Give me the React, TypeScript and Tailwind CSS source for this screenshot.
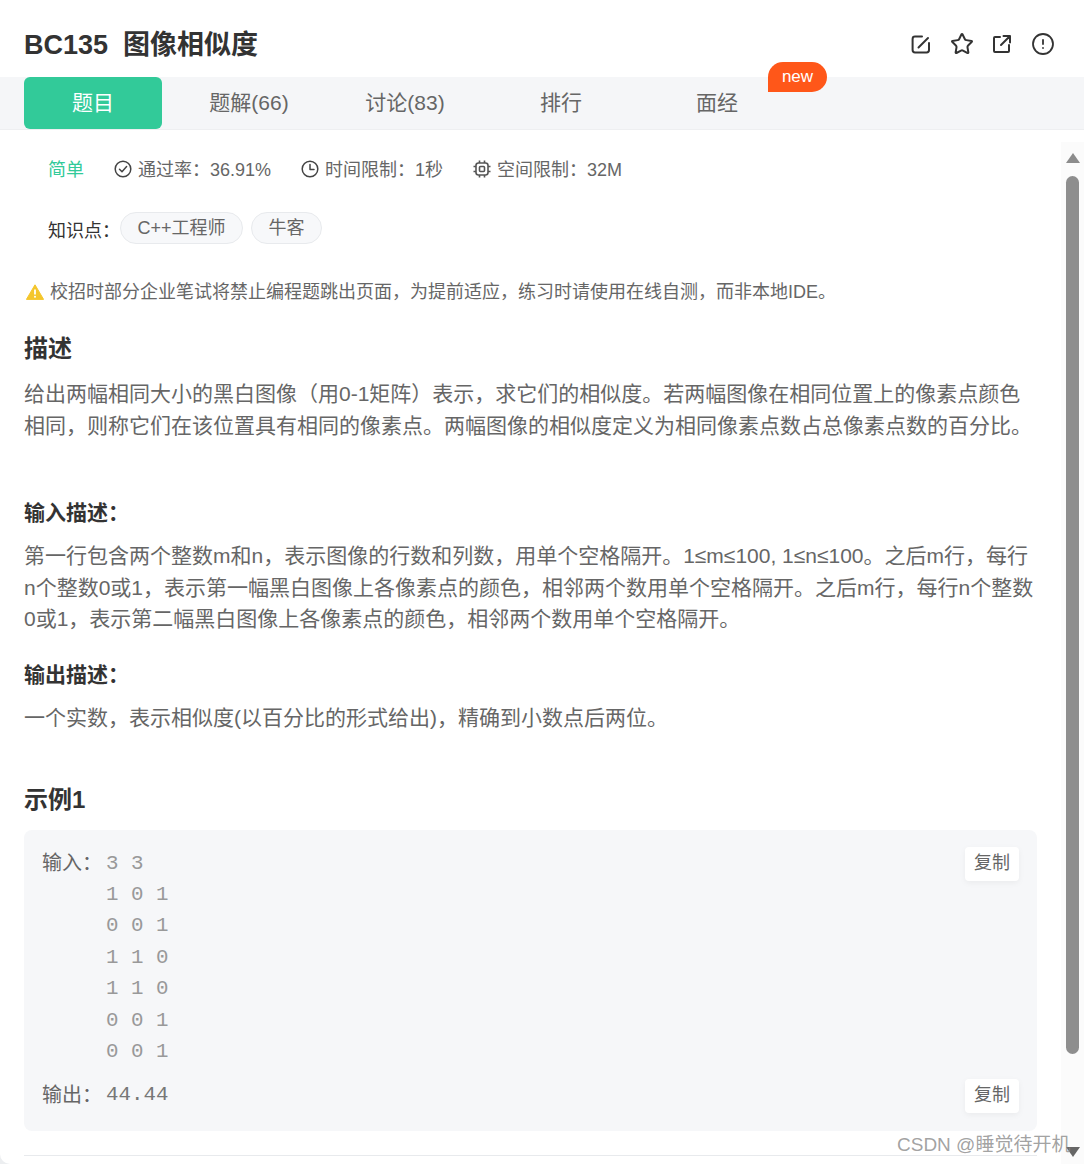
import { Star, CircleAlert } from 'lucide-react'

const font = { fontFamily: '"Liberation Sans", "Noto Sans CJK SC", sans-serif' }

const tabs = [
  { label: '题目', active: true },
  { label: '题解(66)' },
  { label: '讨论(83)' },
  { label: '排行' },
  { label: '面经' },
]

const inputRows = ['3 3', '1 0 1', '0 0 1', '1 1 0', '1 1 0', '0 0 1', '0 0 1']

function EditIcon() {
  return (
    <svg width="20" height="20" viewBox="0 0 20 20" fill="none" stroke="#333" strokeWidth="2" strokeLinecap="round" className="mr-px">
      <path d="M11 2.5H4a2.4 2.4 0 0 0-2.4 2.4v11.2a2.4 2.4 0 0 0 2.4 2.4h11.6a2.4 2.4 0 0 0 2.4-2.4V9" />
      <path d="M17 4 7.5 13.5" />
    </svg>
  )
}

function ShareIcon() {
  return (
    <svg width="20" height="20" viewBox="0 0 20 20" fill="none" stroke="#333" strokeWidth="2" strokeLinecap="round" strokeLinejoin="round">
      <path d="M8 3H3a1 1 0 0 0-1 1v13a1 1 0 0 0 1 1h13a1 1 0 0 0 1-1v-6" />
      <path d="M11.5 2H18v6.5M18 2 9 11" />
    </svg>
  )
}

function CheckIcon() {
  return (
    <svg width="18" height="18" viewBox="0 0 18 18" fill="none" stroke="#444" strokeWidth="1.5" strokeLinecap="round" strokeLinejoin="round" className="-mt-[3px] -ml-px">
      <circle cx="9" cy="9" r="7.8" />
      <path d="M5.5 9.2 8 11.7 12.6 6.6" />
    </svg>
  )
}

function ClockIcon() {
  return (
    <svg width="18" height="18" viewBox="0 0 18 18" fill="none" stroke="#444" strokeWidth="1.5" strokeLinecap="round" strokeLinejoin="round" className="-mt-[3px]">
      <circle cx="9" cy="9" r="7.8" />
      <path d="M9 4.6V9.4H13" />
    </svg>
  )
}

function ChipIcon() {
  return (
    <svg width="18" height="18" viewBox="0 0 18 18" fill="none" stroke="#555" strokeWidth="1.6" className="-mt-[3px]">
      <rect x="3" y="3" width="12" height="12" rx="2.5" />
      <rect x="6.5" y="6.5" width="5" height="5" rx="1" />
      <path d="M6.5 0.5v2.5M11.5 0.5v2.5M6.5 15v2.5M11.5 15v2.5M0.5 6.5H3M0.5 11.5H3M15 6.5h2.5M15 11.5h2.5" />
    </svg>
  )
}

function WarnIcon() {
  return (
    <svg width="18" height="16" viewBox="0 0 18 16" className="ml-0.5 mr-1.5">
      <path d="M9 0.8 17.6 15.4H0.4Z" fill="#f4c62c" stroke="#f4c62c" strokeLinejoin="round" />
      <path d="M9 5.5v5" stroke="#fff" strokeWidth="1.8" />
      <circle cx="9" cy="12.8" r="1" fill="#fff" />
    </svg>
  )
}

function CopyButton() {
  return (
    <button className="w-[54px] h-[34px] bg-white rounded text-[18px] text-[#666] shadow-[0_2px_6px_rgba(0,0,0,0.05)]">
      复制
    </button>
  )
}

export default function App() {
  return (
    <div className="w-[1084px] h-[1164px] bg-[#eceef0]">
      <div style={font} className="relative w-[1084px] h-[1164px] overflow-hidden bg-white rounded-bl-[10px] text-[#333]">
        {/* title */}
        <div className="flex items-center justify-between h-[77px] pl-6 pr-[29px] pt-[10px]">
          <h1 className="text-[27px] font-bold leading-none whitespace-pre pt-1">BC135  图像相似度</h1>
          <div className="flex items-center gap-[19px]">
            <EditIcon />
            <Star size={24} strokeWidth={2} color="#333" className="-mx-px" />
            <ShareIcon />
            <CircleAlert size={24} strokeWidth={1.8} color="#333" />
          </div>
        </div>

        {/* tabs */}
        <div className="relative flex h-[53px] pl-6 gap-[18px] bg-[#f5f6f8] border-b border-[#eeeff1]">
          {tabs.map(t => (
            <div
              key={t.label}
              className={`w-[138px] h-[52px] flex items-center justify-center text-[21px] rounded-md ${
                t.active ? 'bg-[#32ca99] text-white' : 'text-[#666]'
              }`}
            >
              {t.label}
            </div>
          ))}
          <div className="absolute left-[768px] top-[-15px] w-[59px] h-[30px] flex items-center justify-center bg-[#ff5719] text-white text-[17px] rounded-t-[15px] rounded-br-[15px]">
            new
          </div>
        </div>

        {/* body */}
        <div className="flex">
          <div className="w-[1013px] ml-6 shrink-0">
            <div className="flex items-center h-[32px] mt-[24px] pl-6 text-[18px] text-[#666]">
              <span className="text-[#32ca99] w-[67px]">简单</span>
              <CheckIcon />
              <span className="ml-[6px] w-[163px]">通过率：36.91%</span>
              <ClockIcon />
              <span className="ml-[6px] w-[148px]">时间限制：1秒</span>
              <ChipIcon />
              <span className="ml-[6px]">空间限制：32M</span>
            </div>

            <div className="flex items-center h-[32px] mt-[26px] pl-6">
              <span className="text-[18px] w-[72px] pt-[6px]">知识点：</span>
              <span className="h-[32px] w-[123px] mr-2 flex items-center justify-center rounded-full border border-[#e8eaed] bg-[#f7f8fa] text-[18px] text-[#666]">
                C++工程师
              </span>
              <span className="h-[32px] w-[71px] flex items-center justify-center rounded-full border border-[#e8eaed] bg-[#f7f8fa] text-[18px] text-[#666]">
                牛客
              </span>
            </div>

            <div className="flex items-center h-[26px] mt-[35px] text-[18px] text-[#666]">
              <WarnIcon />
              <span>校招时部分企业笔试将禁止编程题跳出页面，为提前适应，练习时请使用在线自测，而非本地IDE。</span>
            </div>

            <h2 className="text-[24px] font-bold leading-[32px] mt-[28px]">描述</h2>
            <p className="text-[21px] leading-[32px] text-[#666] mt-[13px]">
              给出两幅相同大小的黑白图像（用0-1矩阵）表示，求它们的相似度。若两幅图像在相同位置上的像素点颜色相同，则称它们在该位置具有相同的像素点。两幅图像的相似度定义为相同像素点数占总像素点数的百分比。
            </p>

            <h3 className="text-[21px] font-bold leading-[32px] mt-[55px]">输入描述：</h3>
            <p className="text-[21px] leading-[31.5px] text-[#666] mt-[11px]">
              第一行包含两个整数m和n，表示图像的行数和列数，用单个空格隔开。1≤m≤100, 1≤n≤100。之后m行，每行n个整数0或1，表示第一幅黑白图像上各像素点的颜色，相邻两个数用单个空格隔开。之后m行，每行n个整数0或1，表示第二幅黑白图像上各像素点的颜色，相邻两个数用单个空格隔开。
            </p>

            <h3 className="text-[21px] font-bold leading-[32px] mt-[24px]">输出描述：</h3>
            <p className="text-[21px] leading-[32px] text-[#666] mt-[11px]">
              一个实数，表示相似度(以百分比的形式给出)，精确到小数点后两位。
            </p>

            <h2 className="text-[24px] font-bold leading-[32px] mt-[50px]">示例1</h2>

            <div className="mt-[14px] h-[301px] bg-[#f6f7f9] rounded-lg pt-[17px] pl-[18px] pr-[18px] text-[#666]">
              <div className="flex items-start justify-between h-[232px]">
                <div className="flex">
                  <span className="text-[20px] leading-[32px] w-[64px]">输入：</span>
                  <div className="pt-px text-[#999] text-[20.8px] leading-[31.4px] font-['Liberation_Mono',monospace]">
                    {inputRows.map((r, i) => (
                      <div key={i} className="whitespace-pre">{r}</div>
                    ))}
                  </div>
                </div>
                <CopyButton />
              </div>
              <div className="flex items-start justify-between">
                <div className="flex">
                  <span className="text-[20px] leading-[32px] w-[64px]">输出：</span>
                  <span className="text-[#777] text-[20.8px] leading-[31.4px] font-['Liberation_Mono',monospace]">44.44</span>
                </div>
                <CopyButton />
              </div>
            </div>

            <div className="mt-6 border-t border-[#e8eaed]" />
          </div>

          {/* scrollbar */}
          <div className="relative ml-[24px] mt-[12px] w-[23px] h-[1022px] bg-[#fbfbfb] flex flex-col items-center">
            <div className="mt-[11px] w-0 h-0 border-x-[7px] border-x-transparent border-b-[10px] border-b-[#8c8c8c]" />
            <div className="mt-[13px] w-[13px] h-[878px] rounded-full bg-[#8e8e8e]" />
            <div className="mt-[93px] w-0 h-0 border-x-[7px] border-x-transparent border-t-[10px] border-t-[#666]" />
          </div>
        </div>

        <span className="absolute left-[897px] top-[1133px] text-[19px] leading-[24px] text-[#8a8a8a]/80">
          CSDN @睡觉待开机
        </span>
      </div>
    </div>
  )
}
